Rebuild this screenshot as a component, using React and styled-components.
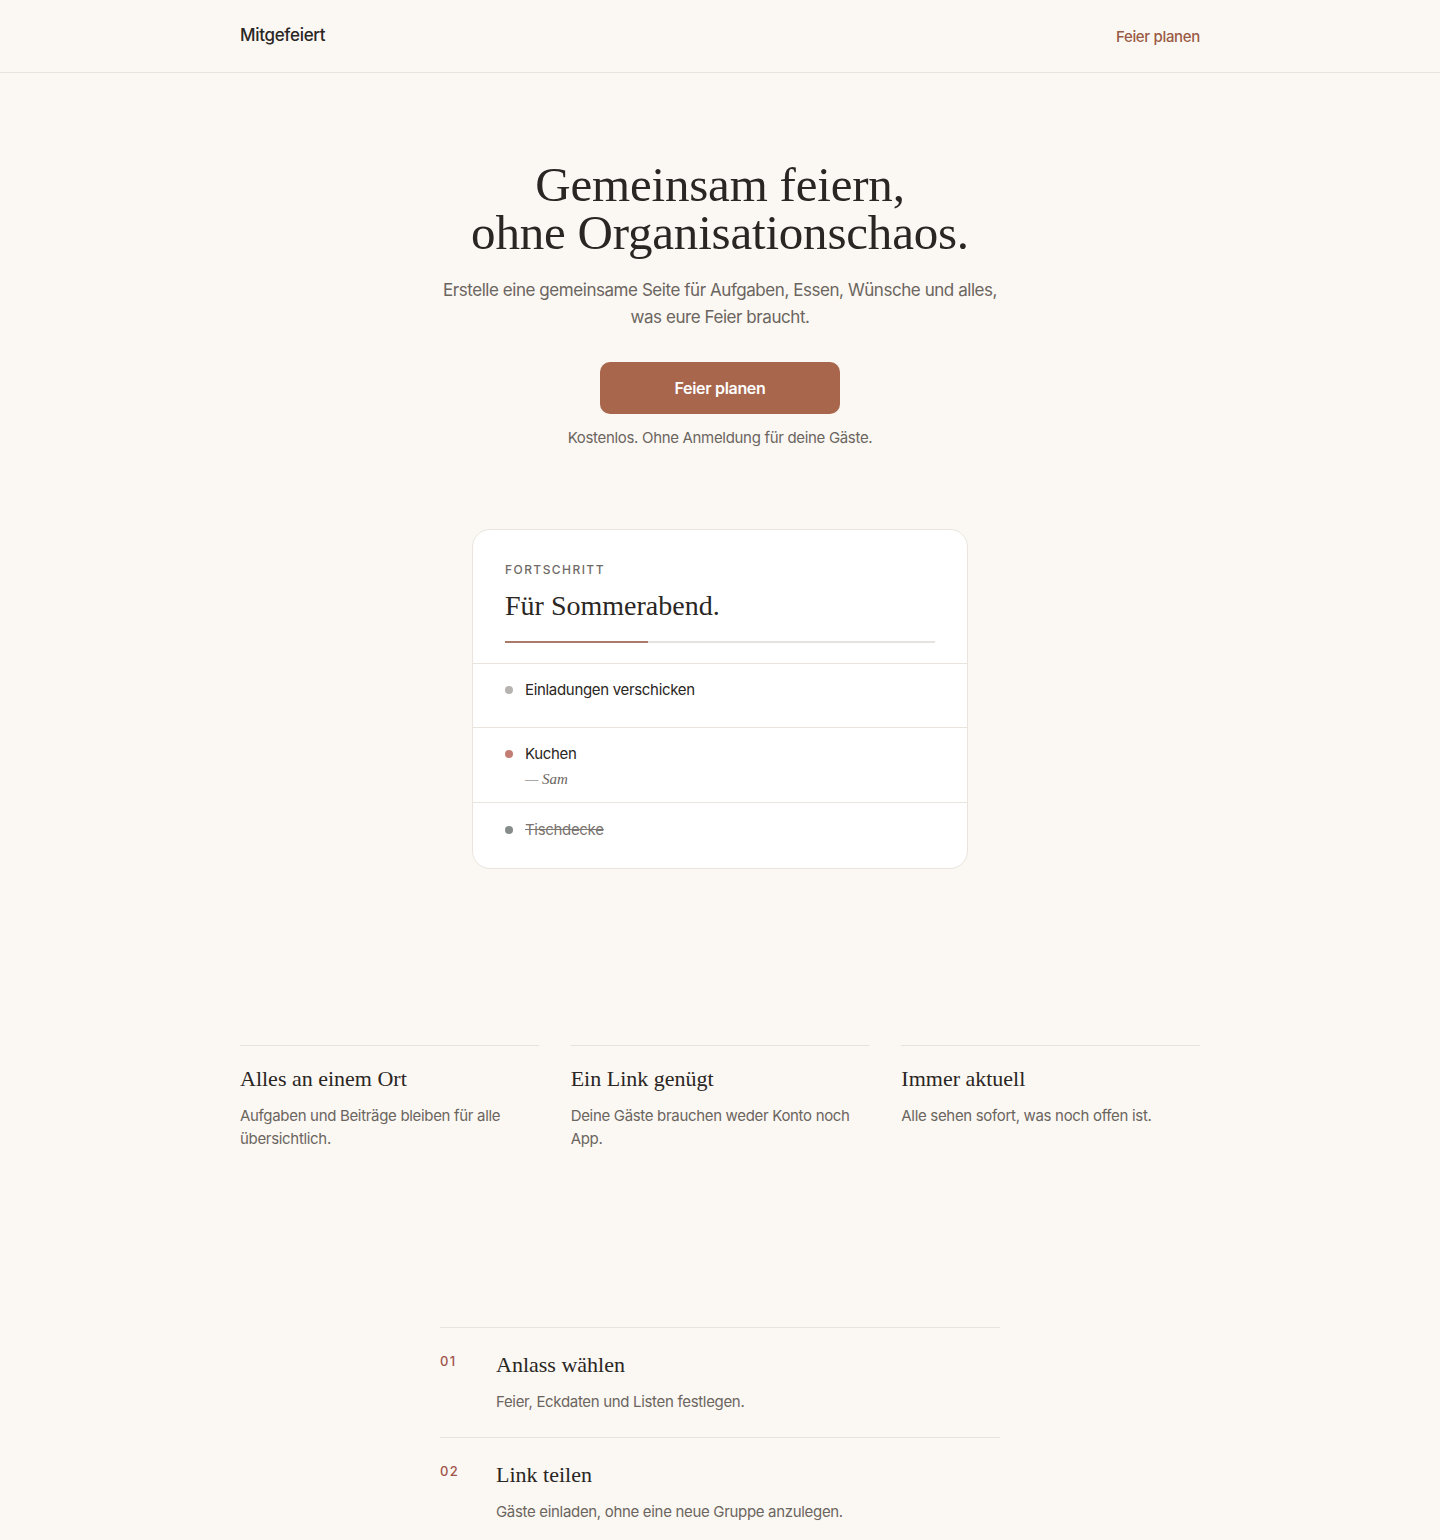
import React from "react";
import styled, { createGlobalStyle } from "styled-components";

const GlobalStyle = createGlobalStyle`
  * { box-sizing: border-box; }
  body {
    margin: 0;
    background: #fbf8f3;
    color: #2a2623;
    font-family: Inter, "Noto Sans", "Liberation Sans", sans-serif;
    letter-spacing: -0.02em;
    -webkit-font-smoothing: antialiased;
  }
  h1, h2, h3, p { margin: 0; }
`;

const serif = `"Liberation Serif", "DejaVu Serif", Georgia, serif`;

const tasks = [
  { label: "Einladungen verschicken", state: "open" },
  { label: "Kuchen", state: "taken", who: "Sam" },
  { label: "Tischdecke", state: "done" },
];

const features = [
  { title: "Alles an einem Ort", text: "Aufgaben und Beiträge bleiben für alle übersichtlich." },
  { title: "Ein Link genügt", text: "Deine Gäste brauchen weder Konto noch App." },
  { title: "Immer aktuell", text: "Alle sehen sofort, was noch offen ist." },
];

const steps = [
  { nr: "01", title: "Anlass wählen", text: "Feier, Eckdaten und Listen festlegen." },
  { nr: "02", title: "Link teilen", text: "Gäste einladen, ohne eine neue Gruppe anzulegen." },
];

const App = () => {
  return (
    <>
      <GlobalStyle />
      <Header>
        <HeaderInner>
          <Logo>Mitgefeiert</Logo>
          <NavLink href="#">Feier planen</NavLink>
        </HeaderInner>
      </Header>

      <Hero>
        <Title>
          <TitleLine>Gemeinsam feiern,</TitleLine>
          <TitleLine>ohne Organisationschaos.</TitleLine>
        </Title>
        <Lead>
          Erstelle eine gemeinsame Seite für Aufgaben, Essen, Wünsche und alles,
          <br />
          was eure Feier braucht.
        </Lead>
        <Cta>Feier planen</Cta>
        <Note>Kostenlos. Ohne Anmeldung für deine Gäste.</Note>

        <Card>
          <CardHead>
            <Eyebrow>Fortschritt</Eyebrow>
            <CardTitle>Für Sommerabend.</CardTitle>
            <Track>
              <Fill style={{ width: "33.3%" }} />
            </Track>
          </CardHead>
          {tasks.map((t) => (
            <TaskRow key={t.label}>
              <Dot $state={t.state} />
              <div>
                <TaskLabel $done={t.state === "done"}>{t.label}</TaskLabel>
                {t.who && <Who>— {t.who}</Who>}
              </div>
            </TaskRow>
          ))}
        </Card>
      </Hero>

      <Features>
        {features.map((f) => (
          <Feature key={f.title}>
            <FeatureTitle>{f.title}</FeatureTitle>
            <FeatureText>{f.text}</FeatureText>
          </Feature>
        ))}
      </Features>

      <Steps>
        {steps.map((s) => (
          <Step key={s.nr}>
            <StepNr>{s.nr}</StepNr>
            <div>
              <FeatureTitle>{s.title}</FeatureTitle>
              <FeatureText>{s.text}</FeatureText>
            </div>
          </Step>
        ))}
      </Steps>
    </>
  );
};

export default App;

const Header = styled.header`
  height: 73px;
  border-bottom: 1px solid #e7e2db;
`;

const HeaderInner = styled.div`
  width: 960px;
  height: 100%;
  margin: 0 auto;
  display: flex;
  align-items: center;
  justify-content: space-between;
`;

const Logo = styled.div`
  font-size: 17px;
  font-weight: 500;
  color: #2a2623;
  margin-top: -2px;
`;

const NavLink = styled.a`
  font-size: 15px;
  font-weight: 500;
  color: #9a5a45;
  text-decoration: none;
`;

const Hero = styled.section`
  display: flex;
  flex-direction: column;
  align-items: center;
  padding-top: 88px;
  text-align: center;
`;

const Title = styled.h1`
  font-family: ${serif};
  font-weight: 400;
  font-size: 49px;
  line-height: 48px;
  color: #2a2623;
  letter-spacing: -0.2px;
`;

const TitleLine = styled.span`
  display: block;
  height: 48px;
`;

const Lead = styled.p`
  margin-top: 20px;
  font-size: 17px;
  line-height: 27px;
  letter-spacing: -0.026em;
  color: #6b6560;
`;

const Cta = styled.button`
  margin-top: 31px;
  width: 240px;
  height: 52px;
  border: none;
  border-radius: 10px;
  background: #a8664d;
  color: #fff;
  font-family: inherit;
  font-size: 16px;
  font-weight: 600;
  letter-spacing: -0.02em;
  cursor: pointer;
`;

const Note = styled.p`
  margin-top: 13px;
  font-size: 15px;
  line-height: 22px;
  color: #6b6560;
`;

const Card = styled.div`
  margin-top: 80px;
  width: 496px;
  background: #fff;
  border: 1px solid #e9e4dd;
  border-radius: 18px;
  overflow: hidden;
  text-align: left;
`;

const CardHead = styled.div`
  padding: 32px 32px 20px;
  border-bottom: 1px solid #e9e4dd;
`;

const Eyebrow = styled.div`
  font-size: 12px;
  line-height: 16px;
  font-weight: 500;
  letter-spacing: 0.12em;
  text-transform: uppercase;
  color: #6f6a65;
`;

const CardTitle = styled.h2`
  margin-top: 10px;
  font-family: ${serif};
  font-weight: 400;
  font-size: 28px;
  line-height: 36px;
  letter-spacing: 0;
  color: #2a2623;
`;

const Track = styled.div`
  margin-top: 17px;
  height: 2px;
  background: #e6e2dd;
`;

const Fill = styled.div`
  height: 100%;
  background: #a97a6a;
`;

const TaskRow = styled.div`
  display: flex;
  align-items: flex-start;
  gap: 12px;
  min-height: 64px;
  padding: 15px 32px 13px;
  border-bottom: 1px solid #e9e4dd;

  &:last-child {
    border-bottom: none;
    padding-top: 16px;
    min-height: 65px;
  }
`;

const dotColors = {
  open: "#b6b3b0",
  taken: "#c27e72",
  done: "#868c89",
};

const Dot = styled.span`
  flex: none;
  width: 8px;
  height: 8px;
  margin-top: 7px;
  border-radius: 50%;
  background: ${(p) => dotColors[p.$state]};
`;

const TaskLabel = styled.div`
  font-size: 15px;
  line-height: 22px;
  color: ${(p) => (p.$done ? "#7a7571" : "#2a2623")};
  text-decoration: ${(p) => (p.$done ? "line-through" : "none")};
`;

const Who = styled.div`
  margin-top: 4px;
  font-family: ${serif};
  font-style: italic;
  font-size: 15px;
  line-height: 20px;
  letter-spacing: 0;
  color: #6b6560;
`;

const Features = styled.section`
  width: 960px;
  margin: 176px auto 0;
  display: grid;
  grid-template-columns: repeat(3, 1fr);
  gap: 32px;
`;

const Feature = styled.div`
  border-top: 1px solid #e7e2db;
  padding-top: 18px;
`;

const FeatureTitle = styled.h3`
  font-family: ${serif};
  font-weight: 400;
  font-size: 22px;
  line-height: 30px;
  letter-spacing: 0;
  color: #2a2623;
`;

const FeatureText = styled.p`
  margin-top: 10px;
  font-size: 15px;
  line-height: 23px;
  color: #6b6560;
`;

const Steps = styled.section`
  width: 560px;
  margin: 177px auto 0;
`;

const Step = styled.div`
  display: grid;
  grid-template-columns: 56px 1fr;
  border-top: 1px solid #e7e2db;
  padding: 22px 0 24px;
`;

const StepNr = styled.div`
  padding-top: 1px;
  font-size: 13px;
  line-height: 20px;
  font-weight: 500;
  letter-spacing: 0.1em;
  color: #a0544a;
`;
